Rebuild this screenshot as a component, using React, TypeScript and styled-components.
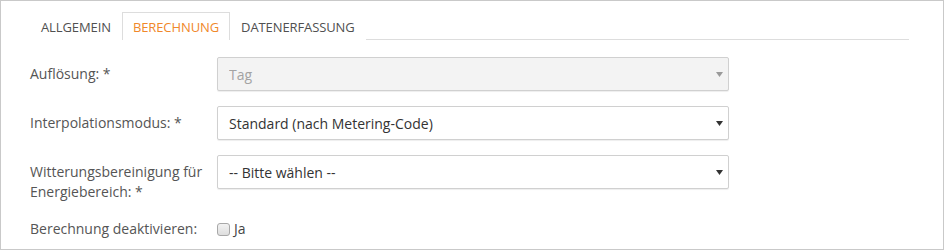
import React from "react";
import styled, { createGlobalStyle } from "styled-components";

const Global = createGlobalStyle`
  html, body { margin: 0; padding: 0; background: #fff; }
  * { box-sizing: border-box; }
`;

const Frame = styled.div`
  height: 250px;
  border: 1px solid #c9c9c9;
  padding: 11px 34px 0 29px;
  font-family: "Open Sans", "Noto Sans", sans-serif;
  font-size: 14px;
  color: #555;
`;

const TabBar = styled.div`
  display: flex;
  border-bottom: 1px solid #dddddd;
  height: 28px;
`;

const Tab = styled.div<{ $active?: boolean }>`
  height: 28px;
  padding: 0 10px;
  border: 1px solid ${(p) => (p.$active ? "#dddddd" : "transparent")};
  border-bottom: none;
  background: #fff;
  display: flex;
  align-items: center;
  font-size: 13px;
  text-transform: uppercase;
  color: ${(p) => (p.$active ? "#f0882a" : "#505050")};
  letter-spacing: -0.1px;
`;

const Form = styled.div`
  display: flex;
  flex-direction: column;
  gap: 15px;
  margin-top: 17px;
`;

const FieldRow = styled.div<{ $pad?: number }>`
  display: grid;
  grid-template-columns: 187px 512px;
  align-items: start;
  padding-top: ${(p) => p.$pad ?? 0}px;
`;

const Label = styled.div<{ $inline?: boolean }>`
  line-height: 20px;
  padding-top: ${(p) => (p.$inline ? 0 : 7)}px;
  padding-right: 12px;
  color: #555;
`;

const SelectWrap = styled.div`
  position: relative;
  height: 34px;
`;

const Select = styled.select`
  appearance: none;
  -webkit-appearance: none;
  width: 100%;
  height: 34px;
  border: 1px solid #d0d0d0;
  border-radius: 2px;
  box-shadow: 0 1px 1px rgba(0, 0, 0, 0.07);
  background: #fff;
  padding: 0 24px 0 11px;
  font-family: "Open Sans", "Noto Sans", sans-serif;
  font-size: 14px;
  color: #333;
  outline: none;

  &:disabled {
    background: #f3f3f3;
    color: #a3a3a3;
    opacity: 1;
  }
`;

const Caret = styled.svg<{ $disabled?: boolean }>`
  position: absolute;
  right: 6px;
  top: 15px;
  width: 7px;
  height: 5px;
  pointer-events: none;
  fill: ${(p) => (p.$disabled ? "#9a9a9a" : "#333")};
`;

const CheckLine = styled.label`
  display: flex;
  align-items: center;
  gap: 4px;
  line-height: 20px;
  color: #444;
`;

const Check = styled.input`
  appearance: none;
  -webkit-appearance: none;
  margin: 1px 0 0 0;
  width: 13px;
  height: 13px;
  border: 1px solid #a8a8a8;
  border-radius: 3px;
  background: linear-gradient(#f2f2f2, #dedede);
`;

function FakeSelect({ value, disabled }: { value: string; disabled?: boolean }) {
  return (
    <SelectWrap>
      <Select disabled={disabled} defaultValue={value}>
        <option value={value}>{value}</option>
      </Select>
      <Caret $disabled={disabled} viewBox="0 0 7 5">
        <path d="M0 0 H7 L3.5 5 Z" />
      </Caret>
    </SelectWrap>
  );
}

export default function App() {
  return (
    <>
      <Global />
      <Frame>
        <TabBar>
          <Tab>Allgemein</Tab>
          <Tab $active>Berechnung</Tab>
          <Tab>Datenerfassung</Tab>
        </TabBar>
        <Form>
          <FieldRow>
            <Label>Auflösung: *</Label>
            <FakeSelect value="Tag" disabled />
          </FieldRow>
          <FieldRow>
            <Label>Interpolationsmodus: *</Label>
            <FakeSelect value="Standard (nach Metering-Code)" />
          </FieldRow>
          <FieldRow>
            <Label>Witterungsbereinigung für Energiebereich: *</Label>
            <FakeSelect value="-- Bitte wählen --" />
          </FieldRow>
          <FieldRow $pad={2}>
            <Label $inline>Berechnung deaktivieren:</Label>
            <CheckLine>
              <Check type="checkbox" />
              Ja
            </CheckLine>
          </FieldRow>
        </Form>
      </Frame>
    </>
  );
}
